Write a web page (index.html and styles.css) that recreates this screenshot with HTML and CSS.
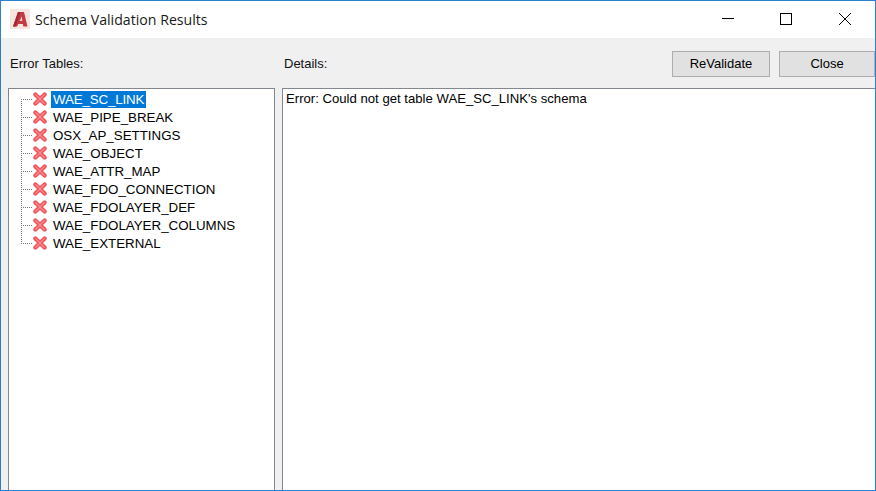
FILE: index.html
```html
<!DOCTYPE html>
<html lang="en">
<head>
<meta charset="utf-8">
<title>Schema Validation Results</title>
<link rel="stylesheet" href="styles.css">
</head>
<body>
<svg class="defs" width="0" height="0" aria-hidden="true">
  <symbol id="x" viewBox="0 0 14 14">
    <path d="M2.4 2.4 L11.6 11.6 M11.6 2.4 L2.4 11.6" fill="none" stroke="#ee5157" stroke-width="4.2" stroke-linecap="round"/>
    <path d="M2.6 2.6 L11.4 11.4 M11.4 2.6 L2.6 11.4" fill="none" stroke="#f98a8e" stroke-width="1.4" stroke-linecap="round"/>
  </symbol>
</svg>
<div class="window">
  <header class="titlebar">
    <svg class="app-icon" viewBox="0 0 20 20" width="20" height="20" aria-hidden="true">
      <rect width="20" height="20" fill="#f6e6e2"/>
      <path d="M3 17.5 L8 3 H14 L17.5 17.5 H13.4 L12.9 15 H8.4 L7 17.5 Z" fill="#c23a44"/>
      <path d="M9.6 12 H12.4 L11.7 7.2 Z" fill="#f3d3d0"/>
      <path d="M3 17.5 L8 3 H10.4 L6 17.5 Z" fill="#a32a34"/>
    </svg>
    <span class="title">Schema Validation Results</span>
    <div class="controls">
      <svg class="ctl" viewBox="0 0 12 12" width="12" height="12" aria-hidden="true"><path d="M0 5.5 H12" stroke="#000" fill="none"/></svg>
      <svg class="ctl" viewBox="0 0 12 12" width="12" height="12" aria-hidden="true"><rect x="0.5" y="0.5" width="11" height="11" stroke="#000" fill="none"/></svg>
      <svg class="ctl ctl-close" viewBox="0 0 12 12" width="12" height="12" aria-hidden="true"><path d="M0 0 L12 12 M12 0 L0 12" stroke="#000" stroke-width="1" fill="none"/></svg>
    </div>
  </header>
  <main class="content">
    <section class="left">
      <div class="left-head"><span class="label">Error Tables:</span></div>
      <ul class="tree">
        <li class="row first"><span class="branch"></span><svg class="err"><use href="#x"/></svg><span class="name selected">WAE_SC_LINK</span></li>
        <li class="row"><span class="branch"></span><svg class="err"><use href="#x"/></svg><span class="name">WAE_PIPE_BREAK</span></li>
        <li class="row"><span class="branch"></span><svg class="err"><use href="#x"/></svg><span class="name">OSX_AP_SETTINGS</span></li>
        <li class="row"><span class="branch"></span><svg class="err"><use href="#x"/></svg><span class="name">WAE_OBJECT</span></li>
        <li class="row"><span class="branch"></span><svg class="err"><use href="#x"/></svg><span class="name">WAE_ATTR_MAP</span></li>
        <li class="row"><span class="branch"></span><svg class="err"><use href="#x"/></svg><span class="name">WAE_FDO_CONNECTION</span></li>
        <li class="row"><span class="branch"></span><svg class="err"><use href="#x"/></svg><span class="name">WAE_FDOLAYER_DEF</span></li>
        <li class="row"><span class="branch"></span><svg class="err"><use href="#x"/></svg><span class="name">WAE_FDOLAYER_COLUMNS</span></li>
        <li class="row last"><span class="branch"></span><svg class="err"><use href="#x"/></svg><span class="name">WAE_EXTERNAL</span></li>
      </ul>
    </section>
    <section class="right">
      <div class="right-head">
        <span class="label">Details:</span>
        <div class="buttons">
          <button class="btn btn-revalidate" type="button">ReValidate</button>
          <button class="btn btn-close" type="button">Close</button>
        </div>
      </div>
      <div class="details">Error: Could not get table WAE_SC_LINK's schema</div>
    </section>
  </main>
</div>
</body>
</html>
```
FILE: styles.css
```css
* { box-sizing: border-box; }
html, body { margin: 0; padding: 0; height: 100%; overflow: hidden; }
body { font-family: "Liberation Sans", Arial, sans-serif; font-size: 13px; color: #000; }
.defs { display: block; height: 0; }
.window {
  width: 876px; height: 491px;
  border: 1px solid #2b80cf;
  display: flex; flex-direction: column;
  background: #f0f0f0;
}
.titlebar {
  height: 37px; flex: none; background: #fff;
  display: flex; align-items: center;
  padding-left: 9px;
}
.app-icon { flex: none; margin-bottom: 1px; }
.title {
  margin-left: 5px;
  font-family: "Open Sans", "Noto Sans", sans-serif;
  font-size: 14.15px; color: #1a1a1a;
}
.controls { margin-left: auto; display: flex; align-items: center; gap: 46px; padding-right: 24px; margin-bottom: 1px; }
.ctl { display: block; }
.ctl-close { margin-left: 1px; }
.content { flex: 1; display: flex; min-height: 0; }
.left { width: 274px; flex: none; display: flex; flex-direction: column; padding-left: 7px; }
.left-head { height: 50px; flex: none; padding: 18px 0 0 2px; }
.label { line-height: 15px; color: #111; }
.tree {
  flex: 1; margin: 0; padding: 2px 0 0 0; list-style: none;
  background: #fff;
  border: 1px solid #828790; border-bottom: 0;
}
.row { height: 18px; display: flex; align-items: center; padding-left: 12px; }
.branch {
  width: 12px; height: 18px; flex: none;
  background-image:
    repeating-linear-gradient(to bottom, #777 0 1px, transparent 1px 2px),
    repeating-linear-gradient(to right, #777 0 1px, transparent 1px 2px);
  background-size: 1px 100%, 100% 1px;
  background-position: 0 0, 0 8px;
  background-repeat: no-repeat;
}
.first .branch { background-size: 1px 10px, 100% 1px; background-position: 0 8px, 0 8px; }
.last .branch { background-size: 1px 9px, 100% 1px; background-position: 0 0, 0 8px; }
.err { width: 14px; height: 14px; flex: none; margin-right: 4px; margin-top: -3px; }
.name { padding: 0 2px; line-height: 17px; white-space: nowrap; color: #000; font-size: 13.33px; margin-top: -1px; }
.selected { background: #0078d7; color: #fff; letter-spacing: -0.15px; }
.right { flex: 1; display: flex; flex-direction: column; padding-left: 7px; min-width: 0; }
.right-head { height: 50px; flex: none; display: flex; padding-left: 2px; }
.right-head .label { padding-top: 18px; }
.buttons { margin-left: auto; display: flex; gap: 9px; padding-top: 13px; }
.btn {
  height: 26px; background: #e1e1e1;
  border: 1px solid #adadad; border-radius: 0;
  font: inherit; color: #000; padding: 0 0 2px 0;
}
.btn-revalidate { width: 98px; }
.btn-close { width: 96px; }
.details {
  flex: 1; background: #fff; padding: 2px 3px;
  border-top: 1px solid #828790; border-left: 1px solid #828790;
  line-height: 16px; color: #000; font-size: 13.15px;
}
```
